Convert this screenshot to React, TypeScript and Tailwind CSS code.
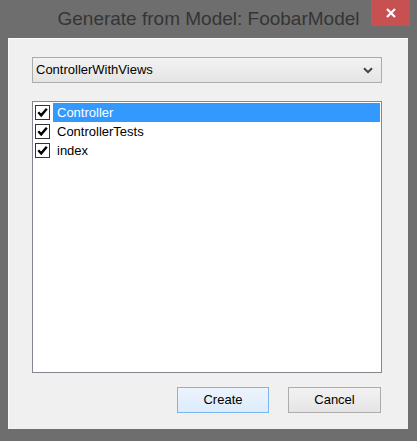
import { useState } from 'react';

const items = ['Controller', 'ControllerTests', 'index'];

function CheckBox() {
  return (
    <div className="w-[15px] h-[15px] border border-[#333] bg-white flex items-center justify-center shrink-0">
      <svg width="11" height="11" viewBox="0 0 11 11">
        <path d="M1.3 5.3 L4.2 8.4 L9.8 1.8" fill="none" stroke="#000" strokeWidth="2.4" />
      </svg>
    </div>
  );
}

export default function App() {
  const [selected, setSelected] = useState('Controller');

  return (
    <div
      className="w-[417px] h-[441px] bg-[#6e6e6e] relative flex flex-col"
      style={{ fontFamily: '"Liberation Sans", Arial, sans-serif' }}
    >
      {/* title bar */}
      <div className="h-[38px] shrink-0 flex items-center justify-center pb-[2px]">
        <span className="text-[19px] text-[#353535] leading-none">
          Generate from Model: FoobarModel
        </span>
      </div>
      <button className="absolute top-0 right-[7px] w-[39px] h-[26px] bg-[#c75050] flex items-center justify-center">
        <svg width="12" height="12" viewBox="0 0 12 12">
          <path d="M2 2 L10 10 M10 2 L2 10" stroke="#fff" strokeWidth="2.2" />
        </svg>
      </button>

      {/* client area */}
      <div className="ml-[8px] w-[400px] h-[391px] bg-[#f0f0f0] border-l border-t border-[#fafafa] flex flex-col px-[23px] pt-[18px] text-[13px] text-black">
        <div className="h-[26px] w-[350px] border border-[#acacac] bg-gradient-to-b from-[#f2f2f2] to-[#e5e5e5] flex items-center justify-between pl-[3px] pr-[8px]">
          <span>ControllerWithViews</span>
          <svg width="10" height="7" viewBox="0 0 10 7">
            <path d="M1 1.2 L5 5.2 L9 1.2" fill="none" stroke="#404040" strokeWidth="2" />
          </svg>
        </div>

        <div className="mt-[18px] h-[272px] w-[350px] border border-[#828790] bg-white pt-[1px] pr-[1px]">
          {items.map(item => (
            <div
              key={item}
              onClick={() => setSelected(item)}
              className="h-[19px] flex items-center pl-[2px]"
            >
              <CheckBox />
              <div
                className={`ml-[3px] flex-1 h-full flex items-center pl-[4px] ${
                  selected === item ? 'bg-[#3399ff] text-white' : ''
                }`}
              >
                {item}
              </div>
            </div>
          ))}
        </div>

        <div className="mt-[14px] flex justify-end gap-[19px] pr-[4px]">
          <button className="w-[92px] h-[26px] border border-[#7eb4ea] bg-gradient-to-b from-[#ecf4fc] to-[#dcecfc] text-[13px]">
            Create
          </button>
          <button className="w-[93px] h-[26px] border border-[#acacac] bg-gradient-to-b from-[#f2f2f2] to-[#e5e5e5] text-[13px]">
            Cancel
          </button>
        </div>
      </div>
    </div>
  );
}
